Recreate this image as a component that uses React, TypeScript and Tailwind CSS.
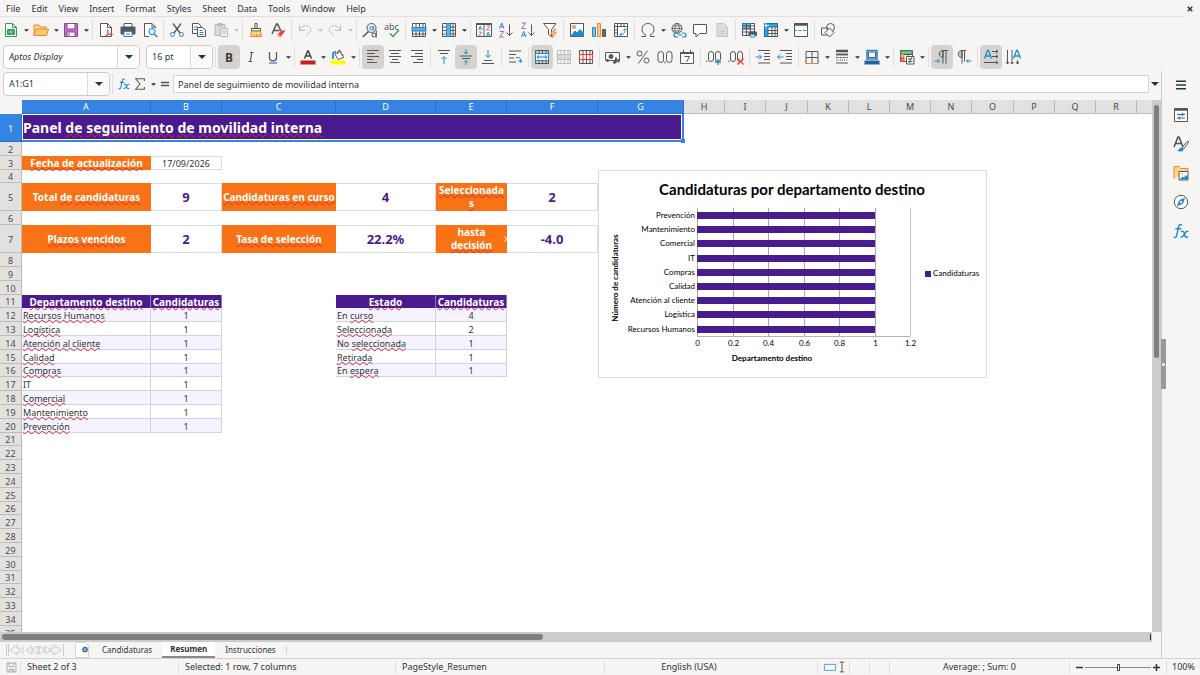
import { useState } from 'react';
import type { ReactNode } from 'react';
import clsx from 'clsx';

const INK = '#575655';
const BLUE = '#1e8bcd';
const SKY = '#83beec';
const RED = '#ed3d3b';
const ORANGE = '#ed8733';
const PURPLE = '#4a1a8f';

/* ---------- icons, all on a 16x16 grid ---------- */

const lines = (rows: [number, number, number][]) => rows.map(([x1, x2, y], i) => <path key={i} d={`M${x1} ${y}H${x2}`} />);

const grid = <path d="M1.5 1.5h13v13h-13zM1.5 5.5h13M1.5 10h13M5 1.5v13M8.5 1.5v13M12 1.5v13" />;

const icons: Record<string, ReactNode> = {
  new: (
    <>
      <path d="M2.5 1.5h7l4 4v9h-11z" fill="#fff" stroke="#2f9e55" />
      <path d="M9.5 1.5v4h4" stroke="#2f9e55" />
      <path d="M4.5 7.5h7v5h-7z" fill="#2f9e55" stroke="#2f9e55" />
      <path d="M5 10h6M8 8v4.5" stroke="#b9e6c8" strokeWidth=".7" />
    </>
  ),
  open: (
    <>
      <path d="M1 13.5V3h5l1.5 2H13v2" fill="#fbd98b" stroke={ORANGE} />
      <path d="M1 13.5 3 7h12.500l-2 6.500z" fill="#fbc878" stroke={ORANGE} />
    </>
  ),
  save: (
    <>
      <path d="M1.5 1.5h13v13h-13z" fill="#c06bd0" stroke="#92429b" />
      <path d="M4 1.5h8V7H4z" fill="#fff" stroke="#92429b" />
      <path d="M4 10h8v4.5H4z" fill="#fff" stroke="#92429b" />
      <path d="M6 11.5v2" stroke="#92429b" strokeWidth="1.5" />
    </>
  ),
  pdf: (
    <>
      <path d="M2.5 1.5h7l4 4v9h-11z" fill="#fff" />
      <path d="M9.5 1.5v4h4" />
      <path d="M7 14.5c3-2 3.500-5 3-6.500-.8-1-1.300.8 0 2.500 1.300 2 3.500 2.500 4.500 2.200.8-1-3.500-1.200-7.500 1.800z" stroke={RED} />
    </>
  ),
  print: (
    <>
      <path d="M4 5V1.5h8V5" fill="#fff" />
      <path d="M1 5h14v7H1z" fill="#5a5958" />
      <path d="M4 9.5h8v5H4z" fill="#fff" stroke={BLUE} />
      <path d="M6 12h4" stroke={BLUE} />
    </>
  ),
  preview: (
    <>
      <path d="M13.5 6V5L10 1.5H2.5v13H7" fill="#fff" />
      <path d="M10 1.5V5h3.5" />
      <circle cx="10" cy="9.5" r="3.2" fill="#d6ecfa" stroke={BLUE} />
      <path d="m12.3 12 3 3" stroke={BLUE} strokeWidth="1.5" />
    </>
  ),
  cut: (
    <>
      <path d="M4 1.5 11 11M12 1.5 5 11" strokeWidth="1.3" />
      <circle cx="3.5" cy="12.5" r="2" stroke={BLUE} />
      <circle cx="12.5" cy="12.5" r="2" stroke={BLUE} />
    </>
  ),
  copy: (
    <>
      <path d="M1.5 1.5h6L10 4v7.5H1.5z" fill="#fff" />
      <path d="M3 5h4M3 7.5h3" stroke={BLUE} />
      <path d="M6.5 5.5h5l3 2.5v6.5h-8z" fill="#fff" />
      <path d="M8.5 8.5h3M8.5 10.5h4M8.5 12.5h4" stroke={BLUE} />
    </>
  ),
  paste: (
    <g stroke="#b9b8b6">
      <path d="M2 2.5h10v11H2z" fill="#dcdbd9" />
      <path d="M5 1.5h4V4H5z" fill="#b9b8b6" />
      <path d="M7.5 6.5h7v8h-7z" fill="#f2f1f0" />
      <path d="M9 9h4M9 11h4" />
    </g>
  ),
  clone: (
    <>
      <path d="M7 1.5h2v5H7zM3.5 6.5h9V9h-9z" fill="#fff" />
      <path d="M3.5 9.5h9l1 5h-11z" fill="#fbd98b" stroke={ORANGE} />
      <path d="M6 12v2.5M8.5 12v2.5M11 12v2.5" stroke={ORANGE} />
    </>
  ),
  clear: (
    <>
      <path d="M2 12 6.500 2h1L11 9M3.500 8.500h6" strokeWidth="1.5" />
      <path d="m7.500 12.500 4-4h4l-5 6.500h-2z" fill={RED} stroke="none" />
      <path d="m7.500 12.500 2.800 2.500" stroke="#f7a9a8" strokeWidth="2" />
    </>
  ),
  undo: <path d="M2.500 3v5.500H8M3 8c2-4 6-5.500 9-3.500 3.500 3 1.500 6-3 9.500" stroke="#bfbebc" />,
  redo: <path d="M13.500 3v5.500H8M13 8c-2-4-6-5.500-9-3.500-3.500 3-1.500 6 3 9.500" stroke="#bfbebc" />,
  find: (
    <>
      <circle cx="9.500" cy="6" r="4.500" fill="#eef6fc" />
      <path d="M6.500 9.500.8 15" strokeWidth="1.600" />
      <circle cx="9.300" cy="6.300" r="1.700" stroke={BLUE} />
      <path d="M11.300 4v4.500" stroke={BLUE} />
      <circle cx="12" cy="13" r="2" fill="#f6f5f4" />
      <path d="M14.300 8.500V15.500" />
    </>
  ),
  spell: (
    <>
      <text x="0" y="7.500" fontSize="9" fill={INK} stroke="none">abc</text>
      <path d="m6 11.500 3 3 6-6.500" stroke="#2f9e55" strokeWidth="1.4" />
    </>
  ),
  row: (
    <>
      <path d="M1.500 1.500h13v13h-13zM5 1.500v13M8.500 1.500v13M12 1.500v13M1.500 12h13" fill="#fff" />
      <path d="M1 5.500h14V9H1z" fill="#5fb0ea" stroke={BLUE} />
    </>
  ),
  col: (
    <>
      <path d="M1.500 1.500h13v13h-13zM1.500 5h13M1.500 8.500h13M1.500 12h13M12 1.500v13" fill="#fff" />
      <path d="M5.500 1.500h4v13h-4z" fill="#5fb0ea" stroke={BLUE} />
    </>
  ),
  sort: (
    <>
      <path d="M.5 1.500h15v13H.5z" fill="#fff" />
      <path d="M.5 2h15" strokeWidth="2" />
      <path d="M8 2v12.500" />
      <g strokeWidth=".9">
        <path d="m2.500 8 1.700-4 1.700 4M3 6.800h2.500M10.500 14l1.700-4 1.700 4M11 12.800h2.500" stroke={BLUE} />
        <path d="M2.700 10h3l-3 4h3M10.700 4h3l-3 4h3" stroke="#b05cc0" />
      </g>
    </>
  ),
  asc: (
    <>
      <path d="m1.500 6.500 2.200-5.500 2.200 5.500M2.300 4.800h3" stroke={BLUE} />
      <path d="M1.700 9.500h4l-4 5.500h4" stroke="#b05cc0" />
      <path d="M11.500 2.500v11M8.500 10.500l3 3 3-3" />
    </>
  ),
  desc: (
    <>
      <path d="M1.700 1h4l-4 5.500h4" stroke="#b05cc0" />
      <path d="m1.500 15 2.200-5.500L5.900 15M2.300 13.300h3" stroke={BLUE} />
      <path d="M11.500 2.500v11M8.500 10.500l3 3 3-3" />
    </>
  ),
  filter: (
    <>
      <path d="M1.500 1.500H14L9.500 7.500v7l-3-2v-5z" fill="#fff" />
      <path d="m12 7-3.500 5H11l-1 4 4.500-5.500H12L14 7z" fill="#fbc878" stroke={ORANGE} strokeWidth=".8" />
    </>
  ),
  image: (
    <>
      <path d="M1.500 1.500h13v13h-13z" fill="#fff" />
      <circle cx="5" cy="5" r="1.500" fill="#fbc878" stroke={ORANGE} />
      <path d="m2 14 4-5 2 2 3-3.500 3.500 3.500v3z" fill={BLUE} stroke={BLUE} />
    </>
  ),
  chart: (
    <>
      <path d="M1.500 5.500h3v9h-3z" fill={SKY} stroke={BLUE} />
      <path d="M6.500 1.500h3v13h-3z" fill="#fbc878" stroke={ORANGE} />
      <path d="M11.500 7.500h3v7h-3z" fill="#6d6c6b" />
    </>
  ),
  pivot: (
    <>
      <path d="M1.500 1.500h13v13h-13z" fill="#fff" />
      <path d="M4.500 1.500v13M1.500 4.500h13M8 1.500v3M11 1.500v3M1.500 8h3M1.500 11h3" />
      <path d="M7 12.500c4 .5 5-2 5-5.500M10 8.500l2-2 2 2M9 10.500l-2 2 2 2" stroke={BLUE} />
    </>
  ),
  omega: <path d="M1.500 14.500h4v-1.800C3 11.500 2 9.500 2 7.300 2 4 4.500 1.500 8 1.500S14 4 14 7.300c0 2.200-1 4.200-3.500 5.400v1.800h4" />,
  link: (
    <>
      <circle cx="7" cy="6.500" r="5" />
      <path d="M2 6.500h10M7 1.500c-3 3-3 7 0 10M7 1.500c3 3 3 7 0 10M3 4h8M3 9h8" strokeWidth=".8" />
      <path d="M8 11H6a1.500 1.500 0 0 0 0 4h2M12 11h2a1.500 1.500 0 0 1 0 4h-2M8 13h4" stroke={BLUE} strokeWidth="1.2" />
    </>
  ),
  comment: <path d="M1.500 2.500h13v9h-7L4 15v-3.500H1.500z" fill="#fff" />,
  header: (
    <g stroke="#c4c3c1">
      <path d="M3 1.500h7L13.500 5v9.500H3z" fill="#dddcda" />
      <path d="M5 9.500h6M5 11.500h6" />
    </g>
  ),
  printArea: (
    <>
      <path d="M1.500 1.500h12v12h-12z" fill="#fff" />
      <path d="M1.500 1.500h8v5h-8z" fill="#5fb0ea" stroke={BLUE} />
      <path d="M1.500 4h12M1.500 7h12M1.500 10h12M5.500 1.500v12M9.500 1.500v12M13.500 1.500v8" />
      <path d="M8 10h7.500v3.500H8z" fill="#5a5958" />
      <path d="M9.500 12.500H14V15H9.500z" fill="#fff" stroke={BLUE} />
    </>
  ),
  freeze: (
    <>
      <path d="M1.500 1.500h13v13h-13z" fill="#fff" />
      <path d="M5 8.500h9.500M5 11.500h9.500M9 5v9.500M12 5v9.500M1.500 14.500h13v-13" />
      <path d="M1.500 14.500v-13h13V5H5v9.500z" fill="#3a9be0" stroke="#1a6fb0" />
      <path d="M3 .5v6M1 3.500h5" stroke="#fff" strokeWidth=".8" />
    </>
  ),
  split: (
    <>
      <path d="M1.500 1.500h13v13h-13z" fill="#fff" />
      <path d="M1.500 2.500h13" strokeWidth="2.500" />
      <path d="M1 8.500h14" stroke={BLUE} strokeDasharray="3 1.500" />
    </>
  ),
  shapes: (
    <>
      <path d="M1.500 6H8v7H1.500z" fill="#f6f5f4" />
      <circle cx="10.500" cy="5.500" r="4" />
      <path d="M9.500 6 14 10.500 9.500 15 5 10.500z" fill="#f6f5f4" />
    </>
  ),
  bold: <text x="8" y="12.500" fontSize="12" fontWeight="700" textAnchor="middle" fill="#3d3c3b" stroke="none">B</text>,
  italic: <path d="M7 3.500h3.500M5.500 12.500H9M8.800 3.500 7.200 12.500" strokeWidth="1.2" />,
  underline: (
    <>
      <path d="M4.500 3v5.500c0 4.500 7 4.500 7 0V3" strokeWidth="1.300" />
      <path d="M4 14h8" stroke="#3584e4" strokeWidth="1.300" />
    </>
  ),
  fontColor: (
    <>
      <path d="M4.500 9.500 7.700 2h.6l3.200 7.500M5.700 7h4.600" stroke="#3d3c3b" strokeWidth="1.400" />
      <path d="M.5 13.500h15" stroke="#c9211e" strokeWidth="4" />
    </>
  ),
  highlight: (
    <>
      <path d="m5 5 5-2.500 3.500 6L8 10.500z" fill="#fff" />
      <path d="M8 5c-1-5 3-5 3-1M12 5l1.500 1.500" />
      <path d="M3 10V4l3-1.500" stroke={BLUE} strokeWidth="1.800" />
      <path d="M.5 13.500h15" stroke="#ffff00" strokeWidth="4" />
    </>
  ),
  left: lines([[2, 14, 1.5], [2, 10, 4.5], [2, 14, 7.5], [2, 8, 10.5], [2, 12, 13.5]]),
  center: lines([[2, 14, 1.5], [4, 12, 4.5], [2, 14, 7.5], [5, 11, 10.5], [3, 13, 13.5]]),
  right: lines([[2, 14, 1.5], [6, 14, 4.5], [2, 14, 7.5], [8, 14, 10.5], [4, 14, 13.5]]),
  top: (
    <>
      {lines([[2, 14, 1.5], [4, 12, 4.5]])}
      <path d="M8 15V8M5.500 10 8 7.500l2.500 2.500" stroke={BLUE} />
    </>
  ),
  middle: (
    <>
      {lines([[2, 14, 7], [4, 12, 9.5]])}
      <path d="M8 0v5M6 3l2 2 2-2M8 16v-4.500M6 13.500l2-2 2 2" stroke={BLUE} />
    </>
  ),
  bottom: (
    <>
      {lines([[4, 12, 11.5], [2, 14, 14.5]])}
      <path d="M8 1v7.500M5.500 6 8 8.500 10.500 6" stroke={BLUE} />
    </>
  ),
  wrap: (
    <>
      {lines([[2, 14, 2], [2, 9, 5.5], [2, 7, 9], [2, 9, 13]])}
      <path d="M9 8.500h2.500q2 0 2 2V13M11.500 11l2 2.500 2-2.500" stroke={BLUE} />
    </>
  ),
  mergeCenter: (
    <>
      {grid}
      <path d="M1.500 4.500h13v7h-13z" fill="#eef6fc" stroke={BLUE} />
      <path d="M3 8h10M5 6.500 3 8l2 1.500M11 6.500 13 8l-2 1.500" stroke={BLUE} />
    </>
  ),
  merge: (
    <g stroke="#bfbebc">
      {grid}
      <path d="M1.500 5.500h13v5h-13z" fill="#d8d7d5" />
    </g>
  ),
  unmerge: (
    <>
      {grid}
      <path d="M1.500 5.500h13v5h-13zM5 5.500v5M8.500 5.500v5M12 5.500v5" fill="#fff" stroke={RED} />
    </>
  ),
  currency: (
    <>
      <path d="M.5 3.500h14v8H.5z" fill="#fff" />
      <circle cx="6" cy="7.500" r="2" fill={INK} />
      <path d="M8 13.500h2v-2M11 13.500v-5M13.500 13.500V10M2.500 13v-3" strokeWidth="2" />
    </>
  ),
  percent: (
    <>
      <circle cx="4.500" cy="4.500" r="2.500" />
      <circle cx="11.500" cy="11.500" r="2.500" />
      <path d="M12.500 1.500 3.500 14.500" />
    </>
  ),
  number: (
    <>
      <rect x="1" y="2.500" width="5.500" height="11" rx="2.700" />
      <rect x="9.500" y="2.500" width="5.500" height="11" rx="2.700" />
      <path d="M8 12.500v2" />
    </>
  ),
  date: (
    <>
      <path d="M1.500 3.500h13v11h-13z" fill="#fff" />
      <path d="M1.500 4h13" strokeWidth="2" />
      <path d="M4.500 1v3M11.500 1v3M5.500 7.500h5L7.500 13" />
    </>
  ),
  addDecimal: (
    <>
      <rect x="2.500" y="2.500" width="5" height="10" rx="2.500" />
      <rect x="9.500" y="2.500" width="5" height="10" rx="2.500" />
      <path d="M.8 11.500V13" />
      <path d="M12 10v6M9 13h6" stroke={BLUE} strokeWidth="1.300" />
    </>
  ),
  delDecimal: (
    <>
      <rect x="2.500" y="2.500" width="5" height="10" rx="2.500" />
      <rect x="9.500" y="2.500" width="5" height="10" rx="2.500" />
      <path d="M.8 11.500V13" />
      <path d="m9.500 9.500 6 6M15.500 9.500l-6 6" stroke={RED} strokeWidth="1.300" />
    </>
  ),
  indent: (
    <>
      {lines([[3, 15, 1.5], [9, 15, 4.5], [9, 15, 7.5], [9, 15, 10.5], [3, 15, 14]])}
      <path d="M.5 8h6M4 5.500 6.500 8 4 10.500" stroke={BLUE} />
    </>
  ),
  outdent: (
    <>
      {lines([[3, 15, 1.5], [9, 15, 4.5], [9, 15, 7.5], [9, 15, 10.5], [3, 15, 14]])}
      <path d="M.5 8h6M3 5.500.5 8 3 10.500" stroke={BLUE} />
    </>
  ),
  borders: (
    <>
      <path d="M2 14.500v-12h12v12M8 2.500v12M2 8.500h12" />
      <path d="M1.500 14.500h13" stroke={ORANGE} />
    </>
  ),
  borderStyle: (
    <>
      <path d="M2 2h12" strokeWidth="2.500" />
      <path d="M2 5.500h12" strokeWidth="1.800" />
      <path d="M2 8.500h12" strokeDasharray="2.500 1" />
      <path d="M2 11h12" strokeDasharray="1 1" />
      <path d="M2 14h12" />
    </>
  ),
  borderColor: (
    <>
      <path d="M3 1.500h10V10H3z" fill="#fff" stroke={BLUE} strokeWidth="1.600" />
      <path d="M4.500 3h7v5.500h-7z" />
      <path d="M.5 13.500h15" stroke="#2a6099" strokeWidth="4" />
    </>
  ),
  conditional: (
    <>
      <path d="M1.500 1.500h12v11h-12z" fill="#fff" />
      <path d="M2 2h11v3H2z" fill="#7fcf98" stroke="#2f9e55" />
      <path d="M2 5.500h3V9H2z" fill="#fbc878" stroke={ORANGE} />
      <path d="M2 9h3v3.500H2z" fill="#f58d8c" stroke={RED} />
      <path d="M5 5.500h8.500M9 5v8" />
      <path d="M7.500 7.500H15V15H7.500z" fill="#fff" />
      <path d="M9 10h4.500M9 12.500h4.500M12.500 8.500 10 14" />
    </>
  ),
  ltr: (
    <>
      <path d="M9 8.500c-5 0-5-7 0-7z" fill="#c9c7c5" />
      <path d="M9 14.500v-13h5M12 1.500v13" />
      <path d="M.5 12h5M3.500 10l2 2-2 2" stroke={BLUE} />
    </>
  ),
  rtl: (
    <>
      <path d="M6 8.500c-5 0-5-7 0-7z" fill="#c9c7c5" />
      <path d="M6 14.500v-13h4M8.500 1.500v11" />
      <path d="M15.500 12h-5M12.500 10l-2 2 2 2" stroke={BLUE} />
    </>
  ),
  textLtr: (
    <>
      <path d="m1.500 9.500 3-8h1l3 8M2.800 7h4.500" stroke={BLUE} strokeWidth="1.300" />
      <path d="M9 2.500h6M13 .8l2 1.700-2 1.700M9 7.500h6M13 5.800l2 1.700-2 1.700M1 13.500h14M13 11.800l2 1.700-2 1.700" />
    </>
  ),
  textTtb: (
    <>
      <path d="m8.500 9.500 3-8h1l3 8M9.800 7h4.500" stroke={BLUE} strokeWidth="1.300" />
      <path d="M2.500 1v14M1 13l1.500 2L4 13M7 1v14M5.500 13 7 15l1.500-2M12.500 11v4M11 13l1.500 2 1.500-2" />
    </>
  ),
  hamburger: <path d="M3 4.200h10M3 8h10M3 11.800h10" stroke="#2e3436" strokeWidth="1.400" />,
  properties: (
    <>
      <path d="M1.500 1.500h13v13h-13z" fill="#fff" />
      <path d="M1.500 2.500h13" strokeWidth="2.500" />
      <path d="M4 7.500h8M4 11h8" />
      <path d="M9.500 6v3M6.500 9.500v3" stroke={BLUE} strokeWidth="1.500" />
    </>
  ),
  styles: (
    <>
      <path d="m1 11 4-10h1l4 10M2.500 7.500h6" strokeWidth="1.600" />
      <path d="M9.500 11 14 5.500q2-1 1.500 1L11 12.500z" fill="#fff" />
      <path d="M4 14.500c2 0 2.500-3 4.500-3s3 2.500 1 3.500-4 .5-5.500-.5z" fill={BLUE} stroke="none" />
    </>
  ),
  gallery: (
    <>
      <path d="M1 13.500v-12h5l1.500 2H15V6" fill="#fbd98b" stroke={ORANGE} />
      <path d="M6 6.500h9V15H6z" fill="#fff" />
      <circle cx="9" cy="9" r=".8" fill={ORANGE} stroke="none" />
      <path d="m6.500 14.500 3-3 1.500 1 2-2.500 2 2v2.500z" fill={BLUE} stroke="none" />
    </>
  ),
  navigator: (
    <>
      <circle cx="8" cy="8" r="6.700" fill="#fff" />
      <path d="m11.500 4.500-5 2-2 5 5-2z" fill={BLUE} stroke={BLUE} />
      <circle cx="8" cy="8" r="1.200" fill="#fff" stroke="none" />
    </>
  ),
  fx: (
    <g stroke={BLUE} strokeWidth="1.400" strokeLinecap="round">
      <path d="M8.500 1.800C6.800.8 5.900 2.200 5.500 4L3.800 12.200c-.4 1.900-1.300 2.800-2.600 2.100M2.800 5.800h5" />
      <path d="M8.500 8.500c2-1 2.500 1 3 3s1.200 3.500 3 2.300M14.800 8.300c-2-.6-3 2.200-4 3.800s-1.600 2.200-2.800 1.800" />
    </g>
  ),
  sigma: <path d="M13 4.500V2H3l5 6-5 6h10v-2.500" strokeWidth="1.200" />,
  equals: <path d="M2.500 6h11M2.500 10h11" strokeWidth="1.800" />,
  doc: (
    <>
      <path d="M1.500.5h10l3 3v12h-13z" fill="#fff" stroke="#d8d7d5" />
      <circle cx="11" cy="7.500" r="2.200" stroke="#3465a4" strokeWidth="1.300" fill="#fff" />
      <path d="M11 6v3M9.500 7.500h3" stroke="#3465a4" strokeWidth=".7" />
    </>
  ),
  disk: <path d="M1.500 1.500h13v13h-13zM4.500 1.500v5h7v-5M4.500 14.500v-4h7v4M7 12.500h3" stroke="#8d8c8a" />,
  selMode: <path d="M.5 4.500h15v8H.5z" stroke="#4f9fd4" strokeWidth="1.300" />,
  beam: <path d="M5 1.500h6M5 14.500h6M8 1.500v13" strokeWidth="1.300" />,
};

function Icon({ name, className = 'size-4' }: { name: string; className?: string }) {
  return (
    <svg viewBox="0 0 16 16" className={clsx('shrink-0 overflow-visible', className)} fill="none" stroke={INK} aria-hidden="true">
      {icons[name]}
    </svg>
  );
}

function Caret({ big, dim }: { big?: boolean; dim?: boolean }) {
  return (
    <svg viewBox="0 0 8 4" className={clsx('shrink-0', big ? 'h-1 w-2' : 'h-[3px] w-[5px]')} aria-hidden="true">
      <path d="M0 0h8L4 4z" fill={dim ? '#bfbebc' : '#2e3436'} />
    </svg>
  );
}

/* ---------- toolbars ---------- */

type Tool = '|' | { icon: string; label: string; menu?: boolean; on?: boolean; dim?: boolean };

const t = (icon: string, label: string): Tool => ({ icon, label });
const m = (icon: string, label: string, dim = false): Tool => ({ icon, label, menu: true, dim });
const on = (icon: string, label: string): Tool => ({ icon, label, on: true });

const standardBar: Tool[] = [
  m('new', 'New'), m('open', 'Open'), m('save', 'Save'), '|',
  t('pdf', 'Export as PDF'), t('print', 'Print'), t('preview', 'Print Preview'), '|',
  t('cut', 'Cut'), t('copy', 'Copy'), m('paste', 'Paste', true), '|',
  t('clone', 'Clone Formatting'), t('clear', 'Clear Formatting'), '|',
  m('undo', 'Undo', true), m('redo', 'Redo', true), '|',
  t('find', 'Find and Replace'), t('spell', 'Spelling'), '|',
  m('row', 'Row'), m('col', 'Column'), '|',
  t('sort', 'Sort'), t('asc', 'Sort Ascending'), t('desc', 'Sort Descending'), t('filter', 'AutoFilter'), '|',
  t('image', 'Insert Image'), t('chart', 'Insert Chart'), t('pivot', 'Pivot Table'), '|',
  m('omega', 'Special Character'), t('link', 'Hyperlink'), t('comment', 'Comment'), t('header', 'Headers and Footers'), '|',
  t('printArea', 'Define Print Area'), m('freeze', 'Freeze Rows and Columns'), t('split', 'Split Window'), '|',
  t('shapes', 'Show Draw Functions'),
];

const formatBar: Tool[] = [
  on('bold', 'Bold'), t('italic', 'Italic'), m('underline', 'Underline'), '|',
  m('fontColor', 'Font Color'), m('highlight', 'Background Color'), '|',
  on('left', 'Align Left'), t('center', 'Align Center'), t('right', 'Align Right'), '|',
  t('top', 'Align Top'), on('middle', 'Center Vertically'), t('bottom', 'Align Bottom'), '|',
  t('wrap', 'Wrap Text'), '|',
  on('mergeCenter', 'Merge and Center'), t('merge', 'Merge Cells'), t('unmerge', 'Unmerge Cells'), '|',
  m('currency', 'Currency'), t('percent', 'Percent'), t('number', 'Number'), t('date', 'Date'), '|',
  t('addDecimal', 'Add Decimal Place'), t('delDecimal', 'Delete Decimal Place'), '|',
  t('indent', 'Increase Indent'), t('outdent', 'Decrease Indent'), '|',
  m('borders', 'Borders'), m('borderStyle', 'Border Style'), m('borderColor', 'Border Color'), '|',
  m('conditional', 'Conditional'), '|',
  on('ltr', 'Left-To-Right'), t('rtl', 'Right-To-Left'), '|',
  on('textLtr', 'Text direction left to right'), t('textTtb', 'Text direction top to bottom'),
];

function Separator() {
  return <span className="mx-[2px] h-5 w-px shrink-0 bg-[#e0dfdd]" />;
}

function Tools({ items }: { items: Tool[] }) {
  return (
    <>
      {items.map((it, i) =>
        it === '|' ? (
          <Separator key={i} />
        ) : (
          <div key={i} className="flex shrink-0 items-center">
            <button
              aria-label={it.label}
              className={clsx('flex h-6 w-[22px] items-center justify-center rounded', it.on && 'bg-[#d5d2cf]')}
            >
              <Icon name={it.icon} />
            </button>
            {it.menu && (
              <button aria-label={`${it.label} options`} className="flex h-6 w-2 items-center justify-center">
                <Caret dim={it.dim} />
              </button>
            )}
          </div>
        ),
      )}
    </>
  );
}

function Combo({ label, value, className, inputClass }: { label: string; value: string; className: string; inputClass?: string }) {
  const [v, setV] = useState(value);
  return (
    <div className={clsx('flex shrink-0 overflow-hidden rounded border border-[#cfcbc8] bg-white', className)}>
      <input
        aria-label={label}
        value={v}
        onChange={e => setV(e.target.value)}
        className={clsx('min-w-0 flex-1 px-[5px] outline-none', inputClass)}
      />
      <button aria-label={`${label} list`} className="flex w-[22px] items-center justify-center border-l border-[#dedbd8] bg-[#fafafa]">
        <Caret big />
      </button>
    </div>
  );
}

const menus = ['File', 'Edit', 'View', 'Insert', 'Format', 'Styles', 'Sheet', 'Data', 'Tools', 'Window', 'Help'];

function MenuBar() {
  return (
    <nav className="flex h-[17px] items-center">
      <div className="flex h-full flex-1 items-center gap-[11px] border-b border-[#e3e1df] px-[6px] pt-px">
        {menus.map(name => (
          <button key={name}>{name}</button>
        ))}
      </div>
      <button aria-label="Close document" className="flex h-full w-4 items-center justify-center pr-[5px]">
        <svg viewBox="0 0 8 8" className="size-[6px]" aria-hidden="true">
          <path d="m1 1 6 6M7 1 1 7" stroke="#2e3436" strokeWidth="2" />
        </svg>
      </button>
    </nav>
  );
}

function FormulaBar() {
  const [formula, setFormula] = useState('Panel de seguimiento de movilidad interna');
  return (
    <div className="flex h-[29px] items-start pt-px pl-[3px]">
      <Combo label="Name Box" value="A1:G1" className="h-6 w-[107px]" />
      <div className="flex h-6 items-center">
        <Separator />
        <button aria-label="Function Wizard" className="flex w-[18px] justify-center"><Icon name="fx" className="size-3" /></button>
        <button aria-label="Select Function" className="flex w-6 items-center gap-1">
          <Icon name="sigma" className="size-[14px]" />
          <Caret />
        </button>
        <button aria-label="Formula" className="flex w-4 justify-center"><Icon name="equals" className="size-3" /></button>
      </div>
      <input
        aria-label="Input line"
        value={formula}
        onChange={e => setFormula(e.target.value)}
        className="mt-[3px] h-[18px] min-w-0 flex-1 border border-[#d5d3d1] bg-white px-1 outline-none"
      />
      <button aria-label="Expand Formula Bar" className="flex h-6 w-3 items-center justify-center"><Caret big /></button>
    </div>
  );
}

/* ---------- sheet ---------- */

type Kind = 'title' | 'kpiLabel' | 'kpiValue' | 'date' | 'head' | 'text' | 'num';
interface Cell { kind: Kind; text: ReactNode; plain?: boolean; span?: number; clipped?: boolean }

const departments = ['Recursos Humanos', 'Logística', 'Atención al cliente', 'Calidad', 'Compras', 'IT', 'Comercial', 'Mantenimiento', 'Prevención'];
const states: [string, number][] = [['En curso', 4], ['Seleccionada', 2], ['No seleccionada', 1], ['Retirada', 1], ['En espera', 1]];

const cells: Record<string, Cell> = {
  A1: { kind: 'title', span: 7, plain: true, text: <>Panel <u>de</u> <u>seguimiento</u> <u>de</u> <u>movilidad</u> <u>interna</u></> },
  A3: { kind: 'kpiLabel', text: 'Fecha de actualización' },
  B3: { kind: 'date', text: '17/09/2026' },
  A5: { kind: 'kpiLabel', text: <>Total <u>de</u> <u>candidaturas</u></>, plain: true },
  B5: { kind: 'kpiValue', text: '9' },
  C5: { kind: 'kpiLabel', text: 'Candidaturas en curso' },
  D5: { kind: 'kpiValue', text: '4' },
  E5: { kind: 'kpiLabel', text: <>Seleccionada<br />s</> },
  F5: { kind: 'kpiValue', text: '2' },
  A7: { kind: 'kpiLabel', text: 'Plazos vencidos' },
  B7: { kind: 'kpiValue', text: '2' },
  C7: { kind: 'kpiLabel', text: 'Tasa de selección' },
  D7: { kind: 'kpiValue', text: '22.2%' },
  E7: { kind: 'kpiLabel', text: <>hasta<br /><u>decisión</u></>, plain: true, clipped: true },
  F7: { kind: 'kpiValue', text: '-4.0' },
  A11: { kind: 'head', text: 'Departamento destino' },
  B11: { kind: 'head', text: 'Candidaturas' },
  D11: { kind: 'head', text: 'Estado' },
  E11: { kind: 'head', text: 'Candidaturas' },
};
departments.forEach((name, i) => {
  cells[`A${12 + i}`] = { kind: 'text', text: name, plain: name === 'IT' };
  cells[`B${12 + i}`] = { kind: 'num', text: 1 };
});
states.forEach(([name, n], i) => {
  const [first, second] = name.split(' ');
  cells[`D${12 + i}`] = { kind: 'text', text: second ? <>{first} <u>{second}</u></> : name, plain: !!second };
  cells[`E${12 + i}`] = { kind: 'num', text: n };
});

const columns: [string, number][] = [
  ['A', 129], ['B', 71], ['C', 114], ['D', 100], ['E', 71], ['F', 91], ['G', 86],
  ...'HIJKLMNOPQR'.split('').map((c): [string, number] => [c, 41.2]),
];

// snap sizes so that the running total stays on whole pixels
const snap = (sizes: number[]) => {
  let end = 0;
  return sizes.map(s => {
    const start = Math.round(end);
    end += s;
    return Math.round(end) - start;
  });
};

const colWidths = snap(columns.map(([, w]) => w));
const rowHeights = snap(Array.from({ length: 35 }, (_, i) => ([0, 4, 6].includes(i) ? 28 : 13.8)));

const spelling =
  '[&_u]:decoration-wavy [&_u]:decoration-[#d62a3a] [&_u]:decoration-1 [&_u]:underline-offset-0 [&_u]:[text-decoration-skip-ink:none]';

const kinds: Record<Kind, string> = {
  title: 'relative bg-[#4a1a8f] pl-px text-left text-[14px] leading-5 font-bold text-white',
  kpiLabel: 'relative bg-[#f97316] text-center text-[10px] leading-[13px] font-bold text-white',
  kpiValue: 'border-y border-r border-[#d9dcdf] text-center text-[13px] leading-5 font-bold text-[#4a1a8f]',
  date: 'border-y border-r border-[#d9dcdf] text-center leading-[11px]',
  head: 'border-r border-[#8f76bd] bg-[#4a1a8f] pt-[2px] text-center text-[10px] leading-[11px] font-bold text-white',
  text: 'border-r border-b border-[#d3d3dc] pt-[2px] pl-px text-left leading-[10px]',
  num: 'border-r border-b border-[#d3d3dc] pt-[2px] text-center leading-[10px]',
};

function SheetCell({ id, row }: { id: string; row: number }) {
  const c = cells[id];
  if (!c) return <td className="p-0" />;
  const striped = (c.kind === 'text' || c.kind === 'num') && row % 2 === 0;
  const spelled = !c.plain && ['kpiLabel', 'head', 'text'].includes(c.kind);
  return (
    <td colSpan={c.span} className={clsx('whitespace-nowrap', spelling, kinds[c.kind], striped && 'bg-[#f5f3ff]')}>
      {spelled ? <u>{c.text}</u> : c.text}
      {c.clipped && (
        <svg viewBox="0 0 3 6" className="absolute top-[11px] right-0 h-[6px] w-[3px]" fill="none" stroke="#fff" aria-hidden="true">
          <path d="m.5.5 2 2.500-2 2.500" />
        </svg>
      )}
      {c.kind === 'title' && (
        <div className="absolute inset-0 border-r-2 border-b-2 border-[#3584e4]">
          <div className="h-full border border-white" />
          <span className="absolute -right-[3px] -bottom-[3px] size-1 bg-[#3584e4]" />
        </div>
      )}
    </td>
  );
}

function Sheet() {
  return (
    <table className="w-full table-fixed border-separate border-spacing-0 text-[9px] leading-[13px] text-[#333]">
      <colgroup>
        <col className="w-[22px]" />
        {colWidths.map((w, i) => <col key={i} style={{ width: w }} />)}
        <col />
      </colgroup>
      <thead>
        <tr className="h-[14px]">
          <td className="bg-[#f6f5f4]" />
          {columns.map(([name], i) => (
            <th
              key={name}
              scope="col"
              className={clsx(
                'border-r border-b pt-px font-normal leading-3',
                i < 7 ? 'border-[#2a6fc9] bg-[#3584e4] font-bold text-white' : 'border-[#bdbcba] bg-[#e2e1e0] text-[#4a4a4a]',
              )}
            >
              {name}
            </th>
          ))}
          <th aria-label="S" className="border-b border-[#bdbcba] bg-[#e2e1e0]" />
        </tr>
      </thead>
      <tbody>
        {rowHeights.map((h, r) => (
          <tr key={r} style={{ height: h }}>
            <th
              scope="row"
              className={clsx(
                'border-r border-b pt-[2px] text-center font-normal leading-[10px]',
                r === 0 ? 'border-[#2a6fc9] bg-[#3584e4] font-bold text-white' : 'border-[#bdbcba] bg-[#e2e1e0] text-[#4a4a4a]',
              )}
            >
              {r + 1}
            </th>
            {r === 0 ? (
              <SheetCell id="A1" row={1} />
            ) : (
              columns.slice(0, 7).map(([name]) => <SheetCell key={name} id={name + (r + 1)} row={r + 1} />)
            )}
            <td colSpan={12} className="p-0" />
          </tr>
        ))}
      </tbody>
    </table>
  );
}

function DepartmentChart() {
  const bars = [...departments].reverse();
  return (
    <svg viewBox="0 0 389 208" className="absolute top-[70px] left-[598px] h-[208px] w-[389px] bg-white font-[Lato,sans-serif]" fill="#000">
      <rect x=".5" y=".5" width="388" height="207" fill="none" stroke="#dcdcdc" />
      <text x="194" y="25" fontSize="15" fontWeight="700" textAnchor="middle">Candidaturas por departamento destino</text>
      {[0, 0.2, 0.4, 0.6, 0.8, 1, 1.2].map((v, i) => {
        const x = Math.round(99 + v * 177.5) + 0.5;
        return (
          <g key={v}>
            <path d={`M${x} 38V166`} stroke={i === 6 ? '#c4c4c4' : '#a9a6b4'} />
            <text x={x} y="176" fontSize="8" textAnchor="middle">{v}</text>
          </g>
        );
      })}
      <path d="M99 166.500H312" stroke="#b3b3b3" />
      {bars.map((name, i) => {
        const y = 42 + Math.round(i * 14.2);
        return (
          <g key={name}>
            <rect x="99" y={y} width="178" height="7" fill={PURPLE} />
            <text x="97" y={y + 6} fontSize="8" textAnchor="end">{name}</text>
          </g>
        );
      })}
      <text x="174" y="191" fontSize="8" fontWeight="700" textAnchor="middle">Departamento destino</text>
      <text transform="translate(20 108) rotate(-90)" fontSize="8" fontWeight="700" textAnchor="middle">Número de candidaturas</text>
      <rect x="327" y="101" width="6" height="6" fill={PURPLE} />
      <text x="335" y="106" fontSize="8">Candidaturas</text>
    </svg>
  );
}

/* ---------- bottom bars and deck ---------- */

function SheetTabs() {
  return (
    <div className="flex h-4 items-stretch text-[8px]">
      <div className="flex w-[66px] items-center pl-[5px]">
        <svg viewBox="0 0 60 12" className="h-3 w-[60px]" fill="none" stroke="#cbcac8" aria-hidden="true">
          <path d="M1.500 0v12M3.500 0v12M12 1 5 6l7 5V8h3V4h-3zM18 2v8M27 2l-6 4 6 4zM33 2l-6 4 6 4zM34 2l6 4-6 4zM40 2l6 4-6 4zM49 1l7 5-7 5V8h-3V4h3zM58.500 0v12" />
        </svg>
      </div>
      <button aria-label="Add sheet" className="ml-2 flex w-[18px] items-center"><Icon name="doc" /></button>
      <button className="px-[10px]">Candidaturas</button>
      <button className="border-b-2 border-[#8a8987] bg-white px-2 font-bold">Resumen</button>
      <button className="px-[10px]">Instrucciones</button>
      <span className="my-1 w-px bg-[#d0cfcd]" />
    </div>
  );
}

function StatusBar() {
  const [zoom, setZoom] = useState(50);
  const field = 'flex h-3 items-center border-l border-[#dedcda]';
  return (
    <footer className="flex h-[17px] items-center border-t border-[#d5d3d1]">
      <div className="flex w-5 justify-end pr-[3px]"><Icon name="disk" className="size-[11px]" /></div>
      <div className={clsx(field, 'w-[158px] pl-[6px]')}>Sheet 2 of 3</div>
      <div className={clsx(field, 'w-[217px] pl-[6px]')}>Selected: 1 row, 7 columns</div>
      <div className={clsx(field, 'w-[209px] pl-[6px]')}>PageStyle_Resumen</div>
      <div className={clsx(field, 'w-[213px] justify-center pr-11')}>English (USA)</div>
      <div className={clsx(field, 'w-8 pl-[6px]')}>
        <Icon name="selMode" className="size-3" />
        <Icon name="beam" className="size-3" />
      </div>
      <div className={clsx(field, 'w-5')} />
      <div className={clsx(field, 'w-5')} />
      <div className={clsx(field, 'min-w-0 flex-1 justify-center')}>Average: ; Sum: 0</div>
      <div className={clsx(field, 'w-[97px] gap-[2px] pl-[6px]')}>
        <button aria-label="Zoom out"><svg viewBox="0 0 7 7" className="size-[7px]"><path d="M0 3.500h7" stroke="#2e3436" strokeWidth="1.500" /></svg></button>
        <input
          type="range"
          aria-label="Zoom"
          value={zoom}
          onChange={e => setZoom(+e.target.value)}
          className="h-3 w-[66px] appearance-none bg-transparent bg-[linear-gradient(#8a8987,#8a8987)] bg-[length:100%_1px] bg-center bg-no-repeat [&::-webkit-slider-thumb]:h-[7px] [&::-webkit-slider-thumb]:w-[3px] [&::-webkit-slider-thumb]:appearance-none [&::-webkit-slider-thumb]:border [&::-webkit-slider-thumb]:border-[#4d4c4b] [&::-webkit-slider-thumb]:bg-white"
        />
        <button aria-label="Zoom in"><svg viewBox="0 0 7 7" className="size-[7px]"><path d="M0 3.500h7M3.500 0v7" stroke="#2e3436" strokeWidth="1.500" /></svg></button>
      </div>
      <div className={clsx(field, 'w-[34px] justify-center')}>100%</div>
    </footer>
  );
}

const decks = [['hamburger', 'Sidebar Settings'], ['properties', 'Properties'], ['styles', 'Styles'], ['gallery', 'Gallery'], ['navigator', 'Navigator'], ['fx', 'Functions']];

function Deck() {
  return (
    <aside className="relative flex w-[39px] flex-col items-center gap-[13px] border-l border-[#cfcdcb] pt-[6px]">
      {decks.map(([icon, label]) => (
        <button key={icon} aria-label={label} className="first:mb-px"><Icon name={icon} /></button>
      ))}
      <div className="absolute top-[268px] -left-px flex h-[50px] w-[5px] items-center justify-center bg-[#999997]">
        <span className="size-[3px] rounded-full bg-white" />
      </div>
    </aside>
  );
}

export default function App() {
  return (
    <div className="flex h-screen flex-col overflow-hidden bg-[#f6f5f4] font-['Noto_Sans',sans-serif] text-[9px] leading-3 text-[#2e3436]">
      <MenuBar />
      <div className="flex h-[26px] items-center"><Tools items={standardBar} /></div>
      <div className="flex h-7 items-center">
        <Combo label="Font Name" value="Aptos Display" className="ml-[3px] h-6 w-[137px]" inputClass="italic" />
        <Combo label="Font Size" value="16 pt" className="ml-[6px] h-6 w-[67px]" />
        <Separator />
        <Tools items={formatBar} />
      </div>

      <div className="flex min-h-0 flex-1">
        <main className="flex min-w-0 flex-1 flex-col">
          <FormulaBar />
          <div className="flex min-h-0 flex-1">
            <div className="relative min-w-0 flex-1 overflow-hidden bg-white">
              <Sheet />
              <DepartmentChart />
            </div>
            <div className="w-[9px] bg-[#cdcccb] px-[2px] pt-[5px]">
              <div className="h-[48%] rounded-full bg-[#7f7f7d]" />
            </div>
          </div>
          <div className="mr-[9px] flex h-[10px] items-center bg-[#cdcccb] pl-[2px]">
            <div className="h-[6px] w-[47%] rounded-full bg-[#7f7f7d]" />
            <span className="mr-px ml-auto h-[6px] w-px bg-[#2e3436]" />
          </div>
          <SheetTabs />
        </main>
        <Deck />
      </div>
      <StatusBar />
    </div>
  );
}
